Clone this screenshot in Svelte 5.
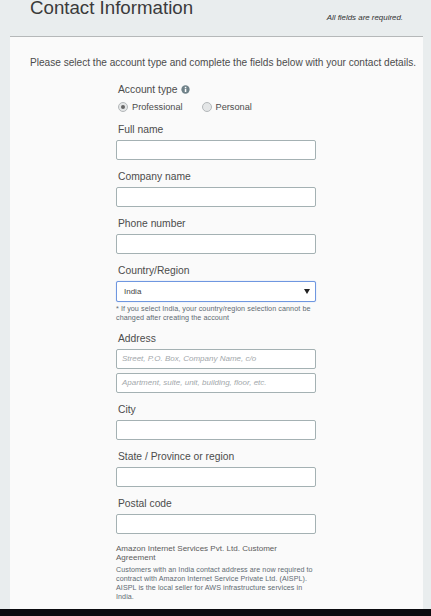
<script>
  const top = ['Full name', 'Company name', 'Phone number'];
  const bottom = ['City', 'State / Province or region', 'Postal code'];
</script>

<div class="page">
  <header class="head">
    <h1>Contact Information</h1>
    <p class="req">All fields are required.</p>
  </header>
  <main class="card">
    <p class="intro">Please select the account type and complete the fields below with your contact details.</p>
    <form class="form">
      <div class="acct">
        <span class="label tight">Account type
          <svg class="info" viewBox="0 0 10 10" width="9" height="9" aria-hidden="true"><circle cx="5" cy="5" r="4.6" fill="#6f8188"/><rect x="4.2" y="4.2" width="1.7" height="3.6" fill="#fff"/><rect x="4.2" y="2" width="1.7" height="1.5" fill="#fff"/></svg>
        </span>
        <div class="radios">
          <span class="radio"><i class="dot on"></i>Professional</span>
          <span class="radio"><i class="dot"></i>Personal</span>
        </div>
      </div>
      {#each top as t}
        <div class="field">
          <span class="label">{t}</span>
          <div class="input"></div>
        </div>
      {/each}
      <div class="field">
        <span class="label">Country/Region</span>
        <div class="input select"><span>India</span><i class="arrow"></i></div>
        <p class="note">* If you select India, your country/region selection cannot be changed after creating the account</p>
      </div>
      <div class="field">
        <span class="label">Address</span>
        <div class="input ph">Street, P.O. Box, Company Name, c/o</div>
        <div class="input ph second">Apartment, suite, unit, building, floor, etc.</div>
      </div>
      {#each bottom as t}
        <div class="field">
          <span class="label">{t}</span>
          <div class="input"></div>
        </div>
      {/each}
      <div class="agree">
        <p class="agree-title">Amazon Internet Services Pvt. Ltd. Customer Agreement</p>
        <p class="agree-text">Customers with an India contact address are now required to contract with Amazon Internet Service Private Ltd. (AISPL). AISPL is the local seller for AWS infrastructure services in India.</p>
      </div>
    </form>
  </main>
  <div class="taskbar"></div>
</div>

<style>
  :global(body) {
    margin: 0;
    background: #e9edee;
  }
  .page {
    width: 431px;
    height: 616px;
    overflow: hidden;
    display: flex;
    flex-direction: column;
    font-family: "Liberation Sans", Arial, sans-serif;
    color: #444;
  }
  .head {
    height: 36px;
    flex: none;
    padding: 0 10px;
    display: flex;
    justify-content: space-between;
    box-sizing: border-box;
    background: #e9edee;
  }
  h1 {
    margin: 0 0 0 20px;
    font-size: 18.7px;
    font-weight: 400;
    line-height: 16px;
    color: #3a3a3a;
  }
  .req {
    margin: 12px 18px 0 0;
    font-size: 7.9px;
    line-height: 12px;
    font-style: italic;
    color: #333;
  }
  .card {
    flex: 1;
    min-height: 0;
    margin: 0 8px 0 10px;
    background: #fafafa;
    border-top: 1px solid #b5b8b9;
    padding: 20px 20px 0;
    overflow: hidden;
  }
  .intro {
    margin: 0;
    font-size: 10.1px;
    line-height: 12px;
    color: #4c4c4c;
    white-space: nowrap;
  }
  .form {
    width: 200px;
    margin: 14px 0 0 86px;
  }
  .acct {
    padding-left: 2px;
  }
  .label {
    display: block;
    font-size: 10.3px;
    line-height: 14px;
    color: #4c4c4c;
    padding-left: 2px;
  }
  .label.tight {
    padding-left: 0;
  }
  .info {
    vertical-align: -0.5px;
    margin-left: 1px;
  }
  .radios {
    display: flex;
    gap: 19px;
    margin-top: 3px;
    height: 14px;
    align-items: center;
  }
  .radio {
    display: flex;
    align-items: center;
    font-size: 9.2px;
    color: #4c4c4c;
  }
  .dot {
    width: 8px;
    height: 8px;
    border-radius: 50%;
    border: 1px solid #b4b8ba;
    background: #e4e6e7;
    margin-right: 4px;
    display: flex;
    align-items: center;
    justify-content: center;
  }
  .dot.on::after {
    content: "";
    width: 4px;
    height: 4px;
    border-radius: 50%;
    background: #666;
  }
  .field {
    margin-top: 10px;
  }
  .acct + .field {
    margin-top: 9px;
  }
  .field .label {
    margin-bottom: 3px;
  }
  .input {
    box-sizing: border-box;
    width: 200px;
    height: 20px;
    background: #fff;
    border: 1px solid #a4b1b3;
    border-radius: 2px;
  }
  .select {
    height: 21px;
    border: 1px solid #6f97e0;
    box-shadow: 0 0 1px #9cb9ee;
    display: flex;
    align-items: center;
    justify-content: space-between;
    padding: 0 5px 0 7px;
    font-size: 8px;
    color: #444;
  }
  .arrow {
    width: 0;
    height: 0;
    border-left: 3.5px solid transparent;
    border-right: 3.5px solid transparent;
    border-top: 5px solid #222;
  }
  .note {
    margin: 2px 0 0;
    font-size: 7.2px;
    line-height: 9px;
    letter-spacing: 0.07px;
    color: #5f6b73;
  }
  .ph {
    font-size: 8px;
    font-style: italic;
    color: #a3a8ab;
    line-height: 18px;
    padding-left: 5px;
  }
  .second {
    margin-top: 4px;
  }
  .agree {
    margin-top: 10px;
    width: 200px;
  }
  .agree-title {
    margin: 0;
    font-size: 8.05px;
    line-height: 9px;
    color: #5c5c5c;
  }
  .agree-text {
    margin: 4px 0 0;
    font-size: 7.15px;
    line-height: 9px;
    letter-spacing: 0.07px;
    color: #5f6b73;
  }
  .taskbar {
    flex: none;
    height: 7px;
    background: #0b0b0f;
  }
</style>
